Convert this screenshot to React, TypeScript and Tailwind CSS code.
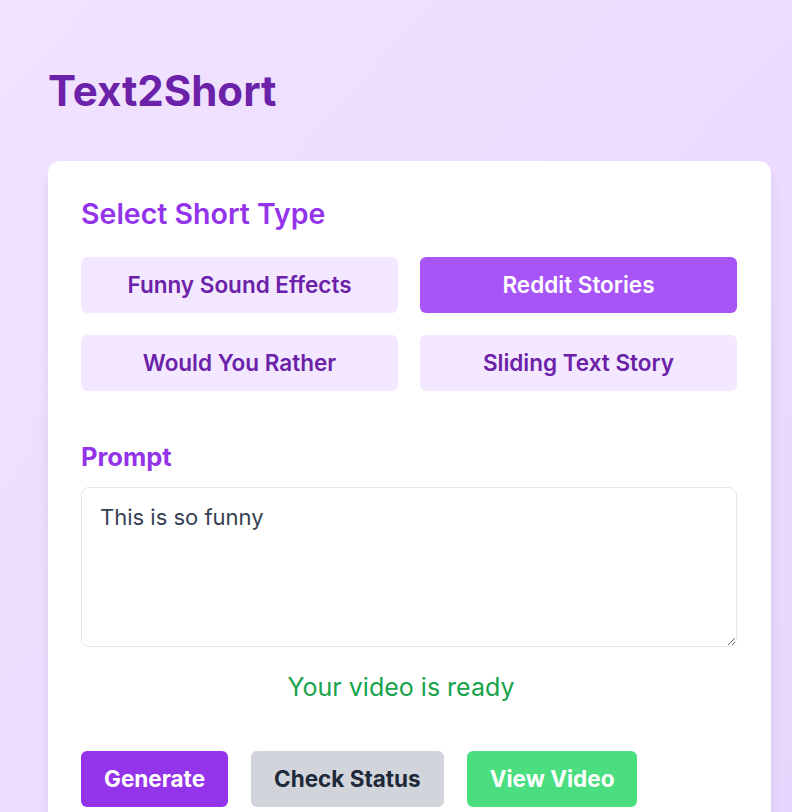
import { useState } from 'react'

const TYPES = ['Funny Sound Effects', 'Reddit Stories', 'Would You Rather', 'Sliding Text Story']

export default function App() {
  const [selected, setSelected] = useState('Reddit Stories')
  const [prompt, setPrompt] = useState('This is so funny')

  return (
    <div
      className="min-h-screen bg-gradient-to-br from-[#f1e3ff] to-[#e8d5fd] pt-[65px] pl-12 pb-10"
      style={{ fontFamily: 'Inter, "Noto Sans", sans-serif' }}
    >
      <h1 className="text-[42px] leading-[52px] font-bold text-[#6b21a8]">Text2Short</h1>

      <div className="mt-[44px] w-[723px] bg-white rounded-xl shadow-lg py-[33px] pl-[33px] pr-[34px]">
        <h2 className="text-[28.5px] leading-10 font-semibold text-[#9333ea]">Select Short Type</h2>

        <div className="mt-[23px] grid grid-cols-2 gap-x-[22px] gap-y-[22px]">
          {TYPES.map(t => (
            <button
              key={t}
              onClick={() => setSelected(t)}
              className={
                selected === t
                  ? 'h-[56px] rounded-md text-[22.5px] font-semibold bg-[#a855f7] text-white'
                  : 'h-[56px] rounded-md text-[22.5px] font-semibold bg-[#f3e8ff] text-[#6b21a8]'
              }
            >
              {t}
            </button>
          ))}
        </div>

        <h2 className="mt-[50px] text-[25.5px] leading-8 font-bold text-[#9333ea]">Prompt</h2>

        <textarea
          value={prompt}
          onChange={e => setPrompt(e.target.value)}
          className="mt-[14px] block w-full h-[160px] rounded-lg border border-gray-200 px-[18px] py-[15px] text-[22px] leading-7 text-gray-700 outline-none"
        />

        <p className="mt-[24px] pr-[16px] text-center text-[25px] leading-8 text-[#16a34a]">Your video is ready</p>

        <div className="mt-[48px] flex gap-[23px]">
          <button className="h-[56px] px-[23px] rounded-md text-[22.5px] font-bold text-white bg-[#9333ea]">Generate</button>
          <button className="h-[56px] px-[23px] rounded-md text-[22.5px] font-bold text-gray-800 bg-[#d1d5db]">Check Status</button>
          <button className="h-[56px] px-[23px] rounded-md text-[22.5px] font-bold text-white bg-[#4ade80]">View Video</button>
        </div>
      </div>
    </div>
  )
}
